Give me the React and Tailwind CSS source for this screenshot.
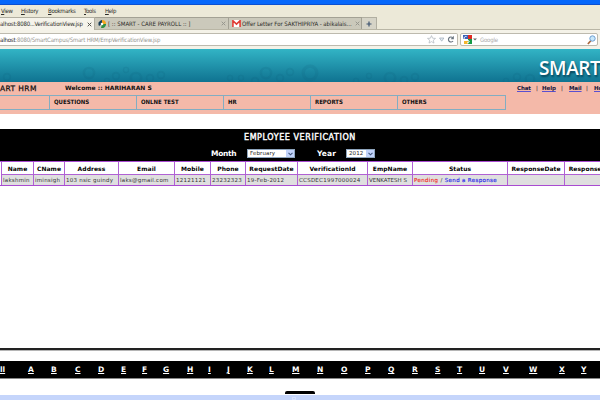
import React from 'react';

const MENU = [
  ['View', 'w-[20px]'],
  ['History', 'w-[27px]'],
  ['Bookmarks', 'w-[36px]'],
  ['Tools', 'w-[21px]'],
  ['Help', 'w-[20px]'],
];

const NAV = [
  ['', 'w-[50px]'],
  ['QUESTIONS', 'w-[87px]'],
  ['ONLNE TEST', 'w-[87px]'],
  ['HR', 'w-[87px]'],
  ['REPORTS', 'w-[87px]'],
  ['OTHERS', 'w-[108px]'],
];

const COLUMNS = [
  ['Name', 'w-[32px]', 'lakshmin'],
  ['CName', 'w-[31px]', 'iminsigh'],
  ['Address', 'w-[54px]', '103 nsic guindy'],
  ['Email', 'w-[56px]', 'laks@gmail.com'],
  ['Mobile', 'w-[36px]', '12121121'],
  ['Phone', 'w-[35px]', '23232323'],
  ['RequestDate', 'w-[52px]', '19-Feb-2012'],
  ['VerificationId', 'w-[70px]', 'CCSDEC1997000024'],
  ['EmpName', 'w-[45px]', 'VENKATESH S'],
  ['Status', 'w-[95px]', ''],
  ['ResponseDate', 'w-[57px]', ''],
  ['ResponseBy', 'w-[50px]', ''],
];

const LETTERS = [
  ['A', 'w-[23px]'], ['B', 'w-[24px]'], ['C', 'w-[23px]'], ['D', 'w-[23px]'],
  ['E', 'w-[21px]'], ['F', 'w-[21px]'], ['G', 'w-[24px]'], ['H', 'w-[21px]'],
  ['I', 'w-[19px]'], ['J', 'w-[20px]'], ['K', 'w-[22px]'], ['L', 'w-[23px]'],
  ['M', 'w-[25px]'], ['N', 'w-[24px]'], ['O', 'w-[24px]'], ['P', 'w-[23px]'],
  ['Q', 'w-[24px]'], ['R', 'w-[23px]'], ['S', 'w-[22px]'], ['T', 'w-[22px]'],
  ['U', 'w-[24px]'], ['V', 'w-[26px]'], ['W', 'w-[30px]'], ['X', 'w-[22px]'],
  ['Y', 'w-[18px]'],
];

const BUBBLES = [
  [7, 28, 4], [89, 24, 6], [107, 32, 3], [116, 27, 4], [126, 21, 3], [136, 29, 6],
  [150, 29, 4], [161, 26, 4], [230, 29, 3], [241, 29, 3], [255, 32, 4], [266, 24, 6],
  [280, 29, 4], [290, 23, 4], [310, 24, 8], [356, 32, 3], [369, 27, 3], [390, 29, 6],
  [404, 31, 4], [415, 28, 4], [506, 32, 3], [517, 28, 4], [530, 30, 5],
];

function GoogleIcon() {
  return (
    <svg className="h-[9px] w-[9px] shrink-0" viewBox="0 0 9 9">
      <rect width="9" height="9" fill="#fff" />
      <path d="M0 0h5v4H0z" fill="#3b62b8" />
      <path d="M5 0h4v4H5z" fill="#e02b22" />
      <path d="M5 4h4v5H5z" fill="#169a45" />
      <path d="M1 6h4v3H1z" fill="#f4b62c" />
      <path d="M3.5 1.5a2 1.8 0 1 0 1 3M3 5.5h2a1.2 1.2 0 1 1-1 2" fill="none" stroke="#fff" strokeWidth="1" />
    </svg>
  );
}

function Close({ active }) {
  return (
    <svg className="h-[5px] w-[5px] shrink-0" viewBox="0 0 5 5">
      <path d="M.7.7l3.6 3.6M4.3.7L.7 4.3" stroke={active ? '#55554f' : '#96968e'} strokeWidth="1" />
    </svg>
  );
}

function Browser() {
  return (
    <header className="h-[49px] bg-[#ece9d8] font-['DejaVu_Sans_Condensed','DejaVu_Sans',sans-serif] text-[#2b2b28]">
      <div className="h-[5px] overflow-hidden border-b border-[#0b4fd0] bg-[#0567fb] text-[6px] leading-[1px] text-white">
        <span className="-mt-[3px] block font-bold tracking-[-0.2px]">Firefox</span>
      </div>
      <nav className="flex h-[12px] pl-[1px] pt-[1px] text-[6px] leading-[10px] tracking-[-0.28px]">
        {MENU.map(([label, w]) => (
          <span key={label} className={w}><u>{label[0]}</u>{label.slice(1)}</span>
        ))}
      </nav>
      <div className="flex h-[13px] border-b border-[#b9b6a5] text-[6px] leading-[12px]">
        <div className="flex h-[13px] w-[95px] items-center border-r border-t border-[#b1afa1] bg-[#f5f3ea]">
          <span className="w-[87px] whitespace-nowrap tracking-[-0.19px]">alhost:8080...VerificationView.jsp</span>
          <Close active />
        </div>
        <div className="flex w-[134px] items-center border-r border-t border-[#a3a194] bg-[#cbc9bb] pl-[3px]">
          <svg className="h-[8px] w-[8px] shrink-0" viewBox="0 0 8 8">
            <path d="M4 0A4 4 0 0 0 1 6L4 4z" fill="#173c57" />
            <path d="M4 0a4 4 0 0 1 4 4H4z" fill="#f1a51e" />
            <path d="M8 4a4 4 0 0 1-5 4l1-4z" fill="#2f8f43" />
            <circle cx="4" cy="4" r="1.3" fill="#fff" />
          </svg>
          <span className="ml-[2px] w-[113px] whitespace-nowrap tracking-[0.02px]">[ :: SMART - CARE PAYROLL :: ]</span>
          <Close />
        </div>
        <div className="flex w-[133px] items-center border-r border-t border-[#a3a194] bg-[#cbc9bb] pl-[3px]">
          <svg className="h-[7px] w-[9px] shrink-0" viewBox="0 0 9 7">
            <path d="M0 0h9v7H0z" fill="#fff" />
            <path d="M.9 7V.7l3.6 3.4L8.1.7V7" fill="none" stroke="#df3b34" strokeWidth="1.6" />
          </svg>
          <span className="ml-[1px] w-[113px] whitespace-nowrap tracking-[-0.05px]">Offer Letter For SAKTHIPRIYA - abikalais...</span>
          <Close />
        </div>
        <div className="flex w-[15px] items-center justify-center border-r border-t border-[#b1afa1] bg-[#d6d4c7]">
          <svg className="h-[6px] w-[6px]" viewBox="0 0 6 6"><path d="M3 .5v5M.5 3h5" stroke="#3c526f" strokeWidth="1.2" /></svg>
        </div>
      </div>
      <div className="flex h-[19px] bg-[#f4f2e8] pt-[3px] text-[6px] leading-[11px]">
        <div className="flex h-[13px] w-[458px] items-center rounded-r-[2px] border-y border-r border-[#bdbaae] bg-white">
          <span className="w-[427px] whitespace-nowrap tracking-[-0.18px] text-[#96968f]">
            <span className="text-[#222]">alhost</span>:8080/SmartCampus/Smart HRM/EmpVerificationView.jsp
          </span>
          <svg className="h-[9px] w-[28px]" viewBox="0 0 28 9">
            <path d="M4.5.6l1.1 2.6 2.9.2-2.2 1.8.7 2.9-2.5-1.5-2.5 1.5.7-2.9L.5 3.4l2.9-.2z" fill="#fff" stroke="#aeb4bb" strokeWidth=".7" />
            <path d="M12.5 3h4.4l-2.2 3.2z" fill="#e4ecf3" stroke="#9dabb7" strokeWidth=".7" />
            <path d="M26 6a2.5 2.5 0 1 1-.4-3.4" fill="none" stroke="#69747f" strokeWidth="1.2" />
            <path d="M26.8.8v3.4h-3.2z" fill="#69747f" />
          </svg>
        </div>
        <div className="ml-[2px] flex h-[13px] w-[138px] items-center rounded-[2px] border border-[#bdbaae] bg-white pl-[2px]">
          <GoogleIcon />
          <svg className="ml-[1px] h-[3px] w-[4px]" viewBox="0 0 4 3"><path d="M0 .5h4L2 2.6z" fill="#666" /></svg>
          <span className="ml-[3px] w-[107px] tracking-[-0.2px] text-[#aaa]">Google</span>
          <svg className="h-[10px] w-[9px] shrink-0" viewBox="0 0 9 10">
            <path d="M4 5.5L.9 9" stroke="#a9683f" strokeWidth="1.7" />
            <circle cx="5.5" cy="3.5" r="2.7" fill="#c9e8fb" stroke="#6d9fd0" strokeWidth="1" />
          </svg>
        </div>
      </div>
    </header>
  );
}

function Banner() {
  return (
    <div className="relative h-[33px] overflow-hidden bg-gradient-to-b from-[#32b4c5] to-[#0f7391]">
      <svg className="absolute inset-0 h-[33px] w-[600px]" viewBox="0 0 600 33">
        {BUBBLES.map(([x, y, r]) => (
          <circle key={x} cx={x} cy={y} r={r * 0.85} fill="none" stroke="#0c5d79" strokeWidth={r * 0.4} opacity=".14" />
        ))}
      </svg>
      <div className="relative pl-[539px] pt-[8px] font-['Open_Sans','Noto_Sans',sans-serif] text-[19px] font-semibold leading-[23px] tracking-[-0.4px] text-white [text-shadow:1px_2px_2px_#07465c]">
        <span className="whitespace-nowrap">SMART</span>
      </div>
    </div>
  );
}

function HrmBar() {
  return (
    <div className="h-[32px] bg-[#f4b9a9] font-['DejaVu_Sans',sans-serif] font-bold text-[#111]">
      <div className="flex h-[13px] overflow-hidden whitespace-nowrap text-[6px] leading-[12px]">
        <div className="w-[65px] shrink-0 text-[7.5px] font-normal leading-[13px] tracking-[0.38px] [-webkit-text-stroke:0.25px_#111]">ART HRM</div>
        <div className="w-[452px] shrink-0 tracking-[0.02px]">Welcome :: HARIHARAN S</div>
        <div className="flex shrink-0 text-[5.5px] leading-[12px] tracking-[-0.1px]">
          <span className="w-[19px] text-[#15153a] underline decoration-[#5a50d0]">Chat</span>
          <span className="w-[6px] font-normal">|</span>
          <span className="w-[19px] text-[#15153a] underline decoration-[#5a50d0]">Help</span>
          <span className="w-[8px] font-normal">|</span>
          <span className="w-[17px] text-[#15153a] underline decoration-[#5a50d0]">Mail</span>
          <span className="w-[8px] font-normal">|</span>
          <span className="text-[#15153a] underline decoration-[#5a50d0]">Home</span>
        </div>
      </div>
      <div className="flex h-[15px] w-[506px] border-t border-b border-t-[#82adc2] border-b-[#82adc2] text-[6px] leading-[12px]">
        {NAV.map(([label, w]) => (
          <div key={w + label} className={`${w} shrink-0 border-r border-r-[#82adc2] pl-[4px] font-['DejaVu_Sans_Condensed','DejaVu_Sans',sans-serif] tracking-[0px]`}>{label}</div>
        ))}
      </div>
    </div>
  );
}

function Select({ value, className }) {
  return (
    <div className={`flex h-[9px] items-center justify-between border border-[#8ea5bd] bg-white pl-[2px] font-normal tracking-[0.1px] text-[#222] ${className}`}>
      <span className="text-[5.5px] leading-[7px]">{value}</span>
      <span className="flex h-[7px] w-[8px] items-center justify-center bg-[#c2d3fb]">
        <svg className="h-[4px] w-[5px]" viewBox="0 0 5 4"><path d="M.5.8l2 2 2-2" fill="none" stroke="#42587f" strokeWidth="1.1" /></svg>
      </span>
    </div>
  );
}

function Verification() {
  return (
    <section className="mt-[15px] font-['DejaVu_Sans',sans-serif]">
      <div className="h-[32px] bg-black font-bold text-white">
        <h1 className="h-[18px] whitespace-nowrap pl-[244px] pt-[3px] text-[8px] font-normal leading-[12px] tracking-[0.58px] [-webkit-text-stroke:0.4px_#fff]">EMPLOYEE VERIFICATION</h1>
        <div className="flex items-center pl-[211px] pt-[1px] text-[7.5px] leading-[11px]">
          <span className="w-[36px] tracking-[-0.3px]">Month</span>
          <Select value="February" className="w-[48px]" />
          <span className="ml-[22px] w-[29px] tracking-[0.1px]">Year</span>
          <Select value="2012" className="w-[29px]" />
        </div>
      </div>
      <div className="flex h-[25px] overflow-hidden border-t border-b border-t-[#a94bd1] border-b-[#a94bd1] pl-px text-[5.5px]">
        {COLUMNS.map(([title, w, value]) => (
          <div key={title} className={`${w} shrink-0 border-l border-l-[#b061d4]`}>
            <div className="h-[13px] overflow-hidden whitespace-nowrap border-b border-b-[#b061d4] text-center text-[6px] font-bold leading-[13px] tracking-[0.05px]">{title}</div>
            <div className={`h-[10px] whitespace-nowrap bg-[#dfdfdf] pl-px leading-[10px] text-[#333] ${title === 'EmpName' ? 'tracking-[0px]' : 'tracking-[0.24px]'}`}>
              {title === 'Status' ? (
                <span className="tracking-[0.34px]"><span className="text-[#f0302c] [-webkit-text-stroke:0.15px_#f0302c]">Pending</span> / <span className="text-[#2b2be8] [-webkit-text-stroke:0.15px_#2b2be8]">Send a Response</span></span>
              ) : value}
            </div>
          </div>
        ))}
      </div>
    </section>
  );
}

export default function App() {
  return (
    <main className="flex h-[400px] w-[600px] flex-col overflow-hidden bg-white">
      <Browser />
      <Banner />
      <HrmBar />
      <Verification />
      <div className="mt-[162px] h-[3px] border-b border-[#b5b5b5] bg-[#222]" />
      <div className="mt-[10px] flex h-[18px] shrink-0 border-b border-[#888] bg-black font-['DejaVu_Sans',sans-serif] text-[7.5px] font-bold leading-[18px] text-white">
        <span className="w-[28px] underline">ll</span>
        {LETTERS.map(([letter, w]) => (
          <span key={letter} className={`${w} shrink-0 underline`}>{letter}</span>
        ))}
      </div>
      <div className="ml-[285px] mt-[12px] h-[3px] w-[30px] rounded-t-[2px] bg-black" />
      <div className="mt-px flex h-[5px] bg-[#c5d5fb] pl-[292px] pt-[2px]">
        <span className="h-[3px] w-[4px] border border-[#d7e2ff]" />
      </div>
    </main>
  );
}
